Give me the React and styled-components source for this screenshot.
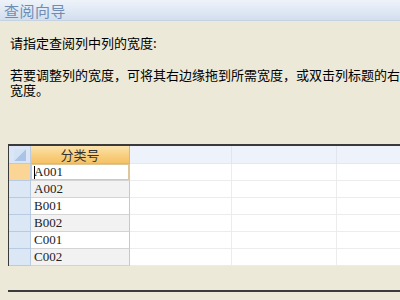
import styled, { createGlobalStyle } from "styled-components"

const GlobalStyle = createGlobalStyle`
    html, body {
        margin: 0;
        padding: 0;
        background: #ece9d8;
    }
    body {
        font-family: "Noto Sans CJK SC", "Liberation Sans", sans-serif;
    }
`

const rows = ["A001", "A002", "B001", "B002", "C001", "C002"]

function Grid() {
    return (
        <Sheet>
            <Corner>
                <svg width="14" height="14" viewBox="0 0 14 14">
                    <polygon points="1,13 13,1 13,13" fill="#a9c4e6" />
                    <polygon points="1,1 13,1 1,13" fill="#d3e2f5" />
                </svg>
            </Corner>
            <HeadCell $active>分类号</HeadCell>
            <HeadCell />
            <HeadCell />
            <HeadCell />
            {rows.map((code, i) => (
                <Row key={code}>
                    <Selector $current={i === 0} />
                    <DataCell $current={i === 0} $shade={i % 2 === 1}>
                        {i === 0 && <Caret />}
                        {code}
                    </DataCell>
                    <EmptyCell />
                    <EmptyCell />
                    <EmptyCell />
                </Row>
            ))}
        </Sheet>
    )
}

export default function App() {
    return (
        <Window>
            <GlobalStyle />
            <TitleBar>查阅向导</TitleBar>
            <Body>
                <Prompt>请指定查阅列中列的宽度:</Prompt>
                <Hint>
                    <span>若要调整列的宽度，可将其右边缘拖到所需宽度，或双击列标题的右边缘以获得合适的</span>
                    <span>宽度。</span>
                </Hint>
                <Grid />
                <Footer />
            </Body>
        </Window>
    )
}

const Window = styled.div`
    width: 400px;
    height: 300px;
    overflow: hidden;
    background: #ece9d8;
`
const TitleBar = styled.div`
    height: 21px;
    box-sizing: border-box;
    padding: 1px 0 0 4px;
    background: linear-gradient(to bottom, #eef3fa 0%, #dde7f3 60%, #d3dfee 100%);
    border-bottom: 1px solid #c5d2e2;
    color: #6f8db4;
    font-size: 15px;
    line-height: 19px;
    letter-spacing: 0.5px;
    white-space: nowrap;
`
const Body = styled.div`
    display: flex;
    flex-direction: column;
    padding-top: 14px;
`
const Prompt = styled.div`
    padding-left: 10px;
    font-size: 13px;
    line-height: 16px;
    color: #000;
    white-space: nowrap;
`
const Hint = styled.div`
    display: flex;
    flex-direction: column;
    margin-top: 16px;
    padding-left: 10px;
    font-size: 13px;
    line-height: 15px;
    color: #000;
    white-space: nowrap;
`
const Sheet = styled.div`
    display: grid;
    grid-template-columns: 22px 99px 102px 105px 90px;
    grid-template-rows: 18px repeat(6, 17px);
    margin: 47px 0 0 8px;
    border-top: 2px solid #3a3a3a;
    border-left: 1px solid #3a3a3a;
    background: #fff;
    width: max-content;
`
const Row = styled.div`
    display: contents;
`
const Corner = styled.div`
    display: flex;
    align-items: center;
    justify-content: center;
    background: #dae6f5;
    border-right: 1px solid #b9cbe2;
    border-bottom: 1px solid #b9cbe2;
`
const HeadCell = styled.div`
    display: flex;
    align-items: center;
    justify-content: center;
    font-size: 13px;
    color: #333;
    background: ${p => p.$active
        ? "linear-gradient(to bottom, #fbe3ad 0%, #f8cf7f 55%, #f6c266 100%)"
        : "#eef2fb"};
    border-right: 1px solid ${p => p.$active ? "#d9b878" : "#e2e5ec"};
    border-bottom: 1px solid ${p => p.$active ? "#d9b878" : "#e4e8f0"};
`
const Selector = styled.div`
    background: ${p => p.$current ? "#fbd595" : "#dce7f5"};
    border-right: 1px solid #b9cbe2;
    border-bottom: 1px solid #b9cbe2;
`
const DataCell = styled.div`
    position: relative;
    display: flex;
    align-items: center;
    padding-left: 3px;
    font-family: "Liberation Serif", serif;
    font-size: 13px;
    color: #222;
    background: ${p => p.$shade ? "#f2f2f2" : "#fff"};
    border-right: 1px solid #c8c8c8;
    border-bottom: 1px solid #d4d4d4;
    box-shadow: ${p => p.$current ? "inset 0 0 0 1px #e0c79a" : "none"};
`
const Caret = styled.span`
    position: absolute;
    left: 3px;
    top: 2px;
    width: 1px;
    height: 13px;
    background: #000;
`
const EmptyCell = styled.div`
    background: #fff;
    border-right: 1px solid #ececec;
    border-bottom: 1px solid #ececec;
`
const Footer = styled.div`
    margin: 24px 0 0 8px;
    border-top: 2px solid #3c3c3c;
`
